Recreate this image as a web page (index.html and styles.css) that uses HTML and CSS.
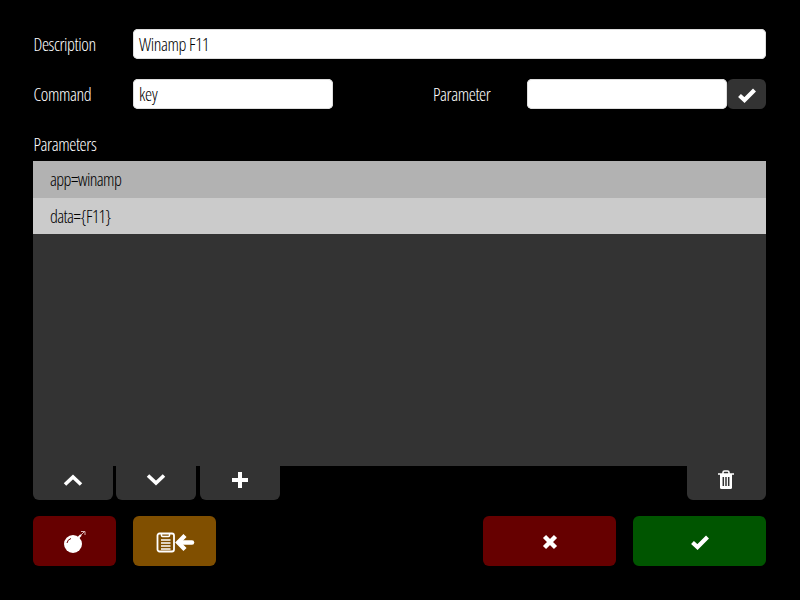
FILE: index.html
```html
<!DOCTYPE html>
<html lang="en">
<head>
<meta charset="utf-8">
<title>Edit command</title>
<link rel="stylesheet" href="styles.css">
</head>
<body>
<main class="app">
  <div class="row row-first">
    <label class="label">Description</label>
    <div class="input input-fill">Winamp F11</div>
  </div>
  <div class="row row-second">
    <label class="label">Command</label>
    <div class="input input-command">key</div>
    <label class="label label-param">Parameter</label>
    <div class="input input-param"></div>
    <button class="btn btn-check" aria-label="Apply">
      <svg class="ico" width="20" height="16" viewBox="0 0 20 16"><path d="M2.500 8.500 7.500 13 17.500 3" fill="none" stroke="#fff" stroke-width="4.200"/></svg>
    </button>
  </div>
  <div class="section-label">Parameters</div>
  <div class="list">
    <div class="item item-a">app=winamp</div>
    <div class="item item-b">data={F11}</div>
  </div>
  <div class="toolbar">
    <button class="btn tool" aria-label="Up"><svg width="20" height="12" viewBox="0 0 20 12"><path d="M2 10.500 10 3 18 10.500" fill="none" stroke="#fff" stroke-width="3.600"/></svg></button>
    <button class="btn tool" aria-label="Down"><svg width="20" height="12" viewBox="0 0 20 12"><path d="M2 1.500 10 9 18 1.500" fill="none" stroke="#fff" stroke-width="3.600"/></svg></button>
    <button class="btn tool" aria-label="Add"><svg width="18" height="18" viewBox="0 0 18 18"><path d="M9 1v16M1 9h16" fill="none" stroke="#fff" stroke-width="4"/></svg></button>
    <span class="spacer"></span>
    <button class="btn tool tool-end" aria-label="Delete"><svg width="18" height="20" viewBox="0 0 18 20"><path d="M1 4h16M6 4V2.500Q6 1 7.500 1h3Q12 1 12 2.500V4" fill="none" stroke="#fff" stroke-width="1.600"/><path d="M3 4h12v13.500Q15 19 13.500 19h-9Q3 19 3 17.500z" fill="#fff"/><path d="M6.300 7v9M9 7v9M11.700 7v9" stroke="#333" stroke-width="1.500"/></svg></button>
  </div>
  <div class="actions">
    <button class="btn act act-small red" aria-label="Reset">
      <svg width="24" height="24" viewBox="0 0 24 24"><circle cx="10" cy="14" r="9" fill="#fff"/><path d="M15 8l3-3" stroke="#fff" stroke-width="2"/><path d="M18 5 21 2M18 1.500h4V5" fill="none" stroke="#e8c8c8" stroke-width="0.900"/><path d="M4 13Q4.500 9.500 8 8.500" fill="none" stroke="#600" stroke-width="1"/></svg>
    </button>
    <button class="btn act act-small amber" aria-label="Paste">
      <svg width="40" height="22" viewBox="0 0 40 22"><rect x="2.500" y="2.500" width="16.500" height="18" rx="2" fill="none" stroke="#fff" stroke-width="1.800"/><path d="M6.500 2v2.500Q6.500 5.500 7.500 5.500h6Q14.500 5.500 14.500 4.500V2" fill="none" stroke="#fff" stroke-width="1.500"/><path d="M6 9h9.500M6 12h9.500M6 15h9.500M6 18h9.500" stroke="#fff" stroke-width="1.300"/><path d="M24 11.500h13" stroke="#fff" stroke-width="4.500" stroke-linecap="round"/><path d="M30 4.500 23.200 11.500 30 18.500" fill="none" stroke="#fff" stroke-width="4.400"/></svg>
    </button>
    <span class="spacer"></span>
    <button class="btn act act-wide red" aria-label="Cancel"><svg width="16" height="16" viewBox="0 0 16 16"><path d="M2.500 2.500l11 11M13.500 2.500l-11 11" stroke="#fff" stroke-width="4.400"/></svg></button>
    <button class="btn act act-wide green" aria-label="OK"><svg width="20" height="16" viewBox="0 0 20 16"><path d="M2.500 8.500 7.500 13 17.500 3" fill="none" stroke="#fff" stroke-width="4.200"/></svg></button>
  </div>
</main>
</body>
</html>
```
FILE: styles.css
```css
* { box-sizing: border-box; }
html, body { margin: 0; height: 100%; background: #000; }
body {
  font-family: "Open Sans", "Liberation Sans", sans-serif;
  font-stretch: 75%;
  font-weight: 300;
  font-size: 18px;
  letter-spacing: -0.4px;
  color: #fff;
}
.app { width: 800px; height: 600px; padding: 29px 34px 0 33px; display: flex; flex-direction: column; }
.row { display: flex; align-items: center; height: 30px; }
.row-second { margin-top: 20px; }
.label { width: 100px; flex: none; padding-left: 0.5px; }
.label-param { width: 94px; margin-left: 100px; padding-left: 0; }
.input {
  height: 30px; line-height: 30px; padding: 0 6px; background: #fff; color: #000;
  border-radius: 5px; box-shadow: inset 0 0 0 1px #ddd;
}
.input-fill { flex: 1; }
.input-command { width: 200px; }
.input-param { width: 200px; }
.btn { border: 0; padding: 0; display: flex; align-items: center; justify-content: center; background: #333; border-radius: 6px; }
.btn-check { flex: 1; height: 30px; padding-top: 2px; }
.section-label { margin-top: 23px; height: 29px; line-height: 24px; padding-left: 0.5px; }
.list { height: 305px; background: #333; }
.item { height: 36.5px; line-height: 36.5px; padding-left: 17px; color: #000; letter-spacing: -0.6px; }
.item-a { background: #b2b2b2; }
.item-b { background: #cbcbcb; }
.toolbar { display: flex; gap: 3.33px; height: 34px; }
.tool { width: 80px; height: 34px; border-radius: 0 0 6px 6px; padding-bottom: 6px; }
.tool-end { width: 79.5px; }
.spacer { flex: 1; }
.actions { display: flex; gap: 17px; margin-top: 16px; height: 50px; }
.act { height: 50px; padding-top: 2px; }
.act-small { width: 83px; }
.act-wide { width: 133px; }
.red { background: #600; }
.amber { background: #804f00; }
.green { background: #050; }
```
